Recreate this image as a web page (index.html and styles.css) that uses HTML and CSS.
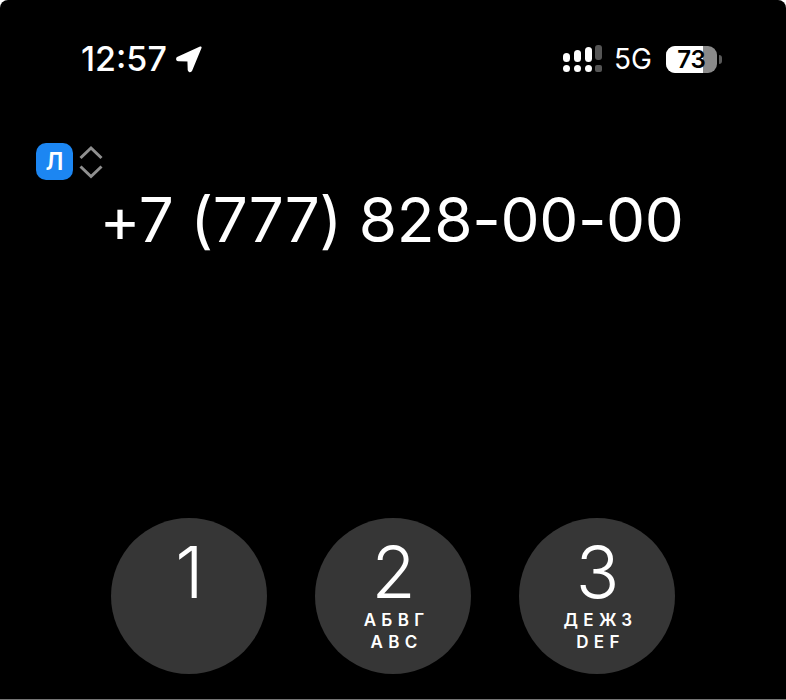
FILE: index.html
```html
<!DOCTYPE html>
<html lang="en">
<head>
    <meta charset="UTF-8">
    <meta name="viewport" content="width=device-width, initial-scale=1.0">
    <title>Phone</title>
    <link rel="stylesheet" href="styles.css">
</head>
<body>
    <div class="screen">
        <div class="status">
            <div class="status-left">
                <span class="time">12:57</span>
                <svg class="arrow" width="28" height="28" viewBox="0 0 28 28">
                    <path d="M25.5 2.5 L2.5 13 Q1.5 15 3.5 15.2 L13.5 15.4 L13.8 25 Q14.5 27 16 25.5 Z" fill="#fff" stroke="#fff" stroke-width="2.2" stroke-linejoin="round"/>
                </svg>
            </div>
            <div class="status-right">
                <svg class="signal" width="39" height="28" viewBox="0 0 39 28">
                    <rect x="0" y="8" width="7" height="9" rx="3.5" fill="#fff"/>
                    <rect x="11" y="5" width="7" height="12" rx="3.5" fill="#fff"/>
                    <rect x="22" y="2" width="7" height="15" rx="3.5" fill="#fff"/>
                    <rect x="32" y="0" width="7" height="15" rx="3" fill="#555"/>
                    <circle cx="3.5" cy="23.5" r="3.5" fill="#fff"/>
                    <circle cx="14.5" cy="23.5" r="3.5" fill="#fff"/>
                    <circle cx="25.5" cy="23.5" r="3.5" fill="#fff"/>
                    <rect x="32" y="20" width="7" height="7" rx="2" fill="#555"/>
                </svg>
                <span class="network">5G</span>
                <div class="battery">
                    <div class="battery-body">
                        <div class="battery-fill"></div>
                        <span class="battery-num">73</span>
                    </div>
                    <div class="battery-cap"></div>
                </div>
            </div>
        </div>

        <div class="sim">
            <span class="sim-badge">Л</span>
            <svg class="sim-arrows" width="26" height="34" viewBox="0 0 26 34">
                <path d="M2.5 13 L13 3 L23.5 13" fill="none" stroke="#8f8f8f" stroke-width="3"/>
                <path d="M2.5 21.5 L13 31.5 L23.5 21.5" fill="none" stroke="#8f8f8f" stroke-width="3"/>
            </svg>
        </div>

        <div class="number">+7 (777) 828-00-00</div>

        <div class="keypad">
            <div class="key">
                <span class="digit">1</span>
            </div>
            <div class="key">
                <span class="digit">2</span>
                <span class="letters">АБВГ</span>
                <span class="letters">ABC</span>
            </div>
            <div class="key">
                <span class="digit">3</span>
                <span class="letters">ДЕЖЗ</span>
                <span class="letters">DEF</span>
            </div>
        </div>
    </div>
</body>
</html>
```

FILE: styles.css
```css
body {
    margin: 0;
    background: #fff;
    font-family: Inter, "Liberation Sans", sans-serif;
    color: #fff;
}

.screen {
    width: 786px;
    height: 700px;
    box-sizing: border-box;
    background: #000;
    border-radius: 8px 8px 0 0;
    border-bottom: 1px solid #777;
    overflow: hidden;
}

.status {
    display: flex;
    justify-content: space-between;
    align-items: center;
    height: 40px;
    padding: 39px 64px 0 81px;
}

.status-left {
    display: flex;
    align-items: center;
    gap: 8px;
}

.time {
    font-size: 34px;
    font-weight: 500;
    line-height: 40px;
}

.status-right {
    display: flex;
    align-items: center;
}

.network {
    font-size: 28px;
    line-height: 40px;
    margin-left: 12px;
}

.battery {
    display: flex;
    align-items: center;
    margin-left: 14px;
}

.battery-body {
    position: relative;
    width: 51px;
    height: 27px;
    border-radius: 9px;
    background: #8a8a8a;
    overflow: hidden;
}

.battery-fill {
    width: 37px;
    height: 100%;
    background: #fff;
}

.battery-num {
    position: absolute;
    top: 0;
    left: 0;
    width: 51px;
    text-align: center;
    color: #000;
    font-size: 24px;
    font-weight: 600;
    line-height: 27px;
}

.battery-cap {
    width: 3px;
    height: 9px;
    margin-left: 2px;
    border-radius: 0 3px 3px 0;
    background: #5a5a5a;
}

.sim {
    display: flex;
    align-items: center;
    gap: 5px;
    margin: 64px 0 0 36px;
}

.sim-badge {
    width: 37px;
    height: 37px;
    border-radius: 10px;
    background: #1c86f2;
    text-align: center;
    font-size: 24px;
    font-weight: 600;
    line-height: 37px;
}

.number {
    margin-top: 2px;
    padding-right: 3px;
    text-align: center;
    font-size: 62px;
    font-weight: 400;
    letter-spacing: -0.35px;
    line-height: 76px;
}

.keypad {
    display: flex;
    gap: 48px;
    margin: 260px 0 0 111px;
}

.key {
    display: flex;
    flex-direction: column;
    align-items: center;
    width: 156px;
    height: 156px;
    border-radius: 50%;
    background: #363636;
}

.digit {
    margin: 17px 0 0 1px;
    font-size: 72px;
    font-weight: 300;
    line-height: 74px;
}

.letters {
    margin-left: 7px;
    font-size: 17px;
    font-weight: 600;
    letter-spacing: 5.3px;
    line-height: 22px;
}
```
